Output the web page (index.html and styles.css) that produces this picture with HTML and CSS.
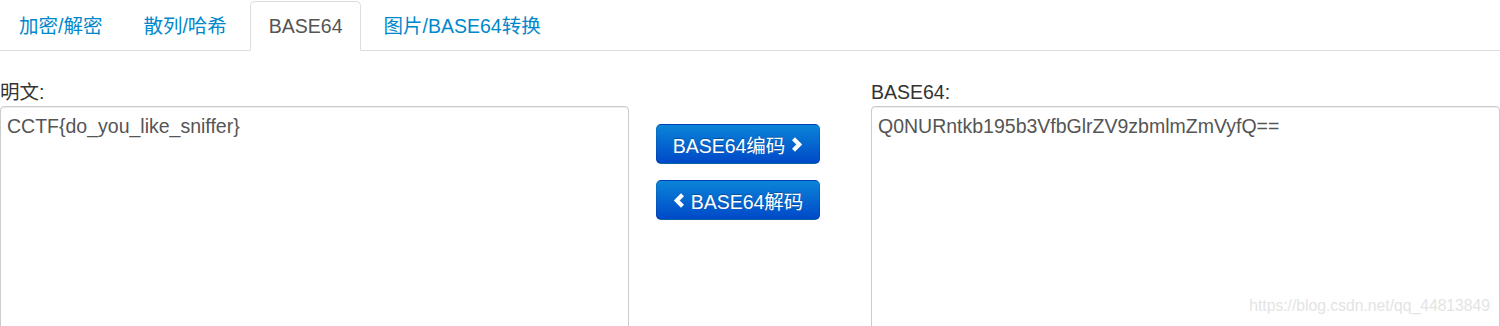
FILE: index.html
```html
<!DOCTYPE html>
<html lang="zh-CN">
<head>
    <meta charset="utf-8">
    <meta name="viewport" content="width=device-width, initial-scale=1.0">
    <link rel="stylesheet" href="styles.css">
</head>
<body>
    <ul class="tabs">
        <li><a href="#">加密/解密</a></li>
        <li><a href="#">散列/哈希</a></li>
        <li class="active"><a href="#">BASE64</a></li>
        <li><a href="#">图片/BASE64转换</a></li>
    </ul>
    <div class="panel">
        <div class="col">
            <label for="plain">明文:</label>
            <textarea id="plain" class="box">CCTF{do_you_like_sniffer}</textarea>
        </div>
        <div class="mid">
            <button type="button" class="btn">BASE64编码
                <svg class="chev" width="13" height="15" viewBox="0 0 13 15"><polyline points="3.5,1.8 9.2,7.5 3.5,13.2" /></svg>
            </button>
            <button type="button" class="btn">
                <svg class="chev" width="13" height="15" viewBox="0 0 13 15"><polyline points="9.5,1.8 3.8,7.5 9.5,13.2" /></svg>
                BASE64解码
            </button>
        </div>
        <div class="col">
            <label for="b64">BASE64:</label>
            <textarea id="b64" class="box">Q0NURntkb195b3VfbGlrZV9zbmlmZmVyfQ==</textarea>
            <span class="mark">https://blog.csdn.net/qq_44813849</span>
        </div>
    </div>
</body>
</html>
```

FILE: styles.css
```css
body {
    margin: 0;
    height: 326px;
    font-family: "Liberation Sans", Arial, "Noto Sans CJK SC", sans-serif;
    font-size: 19.5px;
    color: #333;
    background: #fff;
    overflow: hidden;
}

ul.tabs {
    display: flex;
    margin: 0;
    padding: 1px 0 0 0;
    list-style: none;
    border-bottom: 1px solid #ddd;
}

ul.tabs li {
    margin-right: 4px;
    margin-bottom: -1px;
}

ul.tabs li:first-child {
    margin-right: 3px;
}

ul.tabs a {
    display: block;
    padding: 0 18px;
    line-height: 48px;
    border: 1px solid transparent;
    border-radius: 5px 5px 0 0;
    color: #0088cc;
    text-decoration: none;
}

ul.tabs li.active a {
    padding: 0 17px 0 18px;
    color: #555;
    border-color: #ddd;
    border-bottom-color: #fff;
    background: #fff;
}

div.panel {
    display: grid;
    grid-template-columns: 629px 242px 629px;
    margin-top: 28px;
}

div.col {
    position: relative;
    display: flex;
    flex-direction: column;
}

div.col label {
    line-height: 26px;
    margin-bottom: 1px;
}

textarea.box {
    height: 240px;
    margin: 0;
    padding: 6px;
    border: 1px solid #ccc;
    border-radius: 4px;
    box-shadow: inset 0 1px 1px rgba(0, 0, 0, 0.075);
    font-family: "Liberation Sans", Arial, sans-serif;
    font-size: 19.5px;
    line-height: 26px;
    color: #555;
    resize: none;
    outline: none;
}

span.mark {
    position: absolute;
    right: 10px;
    top: 218px;
    font-size: 15.7px;
    color: #e4e4e4;
}

div.mid {
    display: flex;
    flex-direction: column;
    align-items: flex-start;
    gap: 16px;
    padding: 45px 0 0 27px;
}

button.btn {
    display: inline-flex;
    align-items: center;
    justify-content: center;
    gap: 5px;
    width: 164px;
    height: 40px;
    padding: 0;
    font-family: "Liberation Sans", Arial, "Noto Sans CJK SC", sans-serif;
    font-size: 19.5px;
    color: #fff;
    text-shadow: 0 -1px 0 rgba(0, 0, 0, 0.25);
    background-color: #0055cc;
    background-image: linear-gradient(to bottom, #0a84d8, #0049c8);
    border: 1px solid rgba(0, 0, 0, 0.1);
    border-bottom-color: rgba(0, 0, 0, 0.25);
    border-radius: 5px;
    cursor: pointer;
}

svg.chev polyline {
    fill: none;
    stroke: #fff;
    stroke-width: 4.2;
}
```
